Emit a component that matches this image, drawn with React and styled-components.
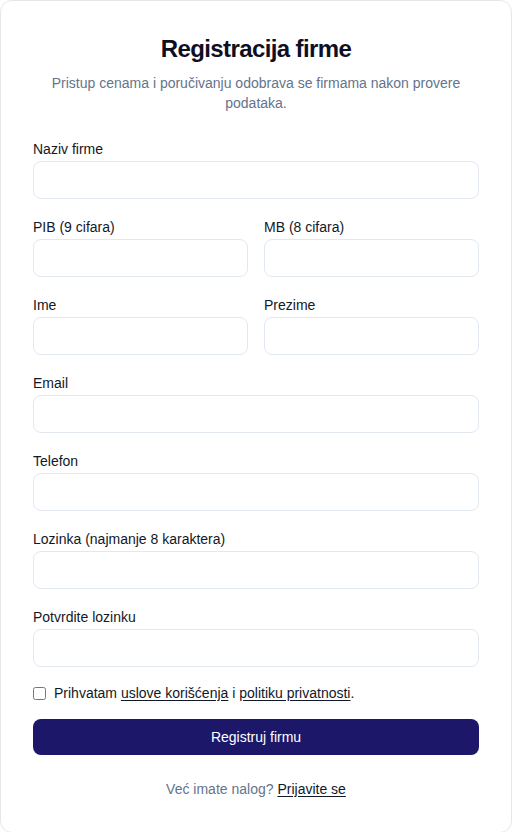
import React, { useState } from 'react';
import styled, { createGlobalStyle } from 'styled-components';

const GlobalStyle = createGlobalStyle`
  * { box-sizing: border-box; }
  body {
    margin: 0;
    background: #ffffff;
    font-family: "Liberation Sans", Arial, sans-serif;
  }
`;

const Card = styled.div`
  width: 512px;
  background: #ffffff;
  border: 1px solid #e5e7eb;
  border-radius: 12px;
  padding: 32px 32px 33px 32px;
`;

const Title = styled.h1`
  margin: 0;
  text-align: center;
  font-size: 24px;
  line-height: 32px;
  font-weight: 700;
  color: #0f0f23;
  letter-spacing: -0.6px;
`;

const Subtitle = styled.p`
  margin: 8px 0 0;
  text-align: center;
  font-size: 14px;
  line-height: 20px;
  color: #64748b;
`;

const Form = styled.form`
  margin-top: 26px;
  display: flex;
  flex-direction: column;
  gap: 18px;
`;

const Row = styled.div`
  display: grid;
  grid-template-columns: 1fr 1fr;
  gap: 16px;
`;

const Field = styled.div`
  display: flex;
  flex-direction: column;
`;

const Label = styled.label`
  font-size: 14px;
  line-height: 20px;
  color: #111827;
  margin-bottom: 2px;
`;

const Input = styled.input`
  height: 38px;
  width: 100%;
  border: 1px solid #e2e8f0;
  border-radius: 8px;
  padding: 0 12px;
  font-size: 14px;
  font-family: inherit;
  background: #ffffff;
  outline: none;
`;

const CheckRow = styled.label`
  display: flex;
  align-items: center;
  gap: 8px;
  font-size: 14px;
  line-height: 20px;
  color: #111827;
  margin-top: -2px;
`;

const Check = styled.input`
  margin: 0;
  width: 13px;
  height: 13px;
`;

const TextLink = styled.a`
  color: #111827;
  text-decoration: underline;
  text-underline-offset: 2px;
`;

const Button = styled.button`
  margin-top: -2px;
  height: 36px;
  width: 100%;
  border: none;
  border-radius: 8px;
  background: #1c1769;
  color: #ffffff;
  font-size: 14px;
  font-family: inherit;
  cursor: pointer;
`;

const Footer = styled.p`
  margin: 6px 0 0;
  text-align: center;
  font-size: 14px;
  line-height: 20px;
  color: #64748b;
`;

const App = () => {
  const [agreed, setAgreed] = useState(false);

  return (
    <>
      <GlobalStyle />
      <Card>
        <Title>Registracija firme</Title>
        <Subtitle>
          Pristup cenama i poručivanju odobrava se firmama nakon provere podataka.
        </Subtitle>
        <Form onSubmit={(e) => e.preventDefault()}>
          <Field>
            <Label>Naziv firme</Label>
            <Input type="text" />
          </Field>
          <Row>
            <Field>
              <Label>PIB (9 cifara)</Label>
              <Input type="text" />
            </Field>
            <Field>
              <Label>MB (8 cifara)</Label>
              <Input type="text" />
            </Field>
          </Row>
          <Row>
            <Field>
              <Label>Ime</Label>
              <Input type="text" />
            </Field>
            <Field>
              <Label>Prezime</Label>
              <Input type="text" />
            </Field>
          </Row>
          <Field>
            <Label>Email</Label>
            <Input type="email" />
          </Field>
          <Field>
            <Label>Telefon</Label>
            <Input type="tel" />
          </Field>
          <Field>
            <Label>Lozinka (najmanje 8 karaktera)</Label>
            <Input type="password" />
          </Field>
          <Field>
            <Label>Potvrdite lozinku</Label>
            <Input type="password" />
          </Field>
          <CheckRow>
            <Check
              type="checkbox"
              checked={agreed}
              onChange={() => setAgreed(!agreed)}
            />
            <span>
              Prihvatam <TextLink href="#">uslove korišćenja</TextLink> i{' '}
              <TextLink href="#">politiku privatnosti</TextLink>.
            </span>
          </CheckRow>
          <Button type="submit">Registruj firmu</Button>
          <Footer>
            Već imate nalog? <TextLink href="#">Prijavite se</TextLink>
          </Footer>
        </Form>
      </Card>
    </>
  );
};

export default App;
